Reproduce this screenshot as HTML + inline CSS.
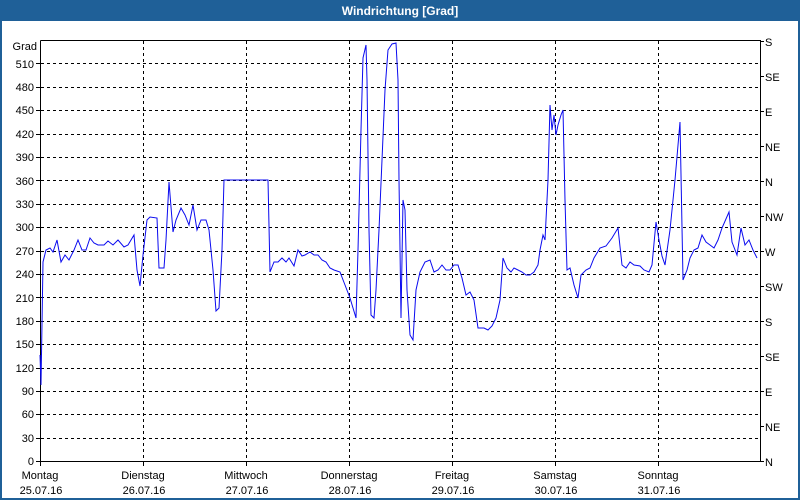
<!DOCTYPE html>
<html><head><meta charset="utf-8"><style>
html,body{margin:0;padding:0;width:800px;height:500px;overflow:hidden;background:#fff;font-family:"Liberation Sans",Tahoma,sans-serif;}
</style></head><body>
<svg width="800" height="500" xmlns="http://www.w3.org/2000/svg" font-family="Liberation Sans, sans-serif" font-size="11">
<rect x="0" y="0" width="800" height="500" fill="#1f6098"/>
<rect x="2" y="21" width="796" height="477" fill="#fff"/>
<text x="400" y="15" text-anchor="middle" fill="#fff" font-weight="bold" font-size="12">Windrichtung [Grad]</text>
<g stroke="#000" stroke-dasharray="3,3" stroke-width="1">
<line x1="41" x2="760" y1="63.5" y2="63.5"/><line x1="41" x2="760" y1="87.5" y2="87.5"/><line x1="41" x2="760" y1="110.5" y2="110.5"/><line x1="41" x2="760" y1="134.5" y2="134.5"/><line x1="41" x2="760" y1="157.5" y2="157.5"/><line x1="41" x2="760" y1="180.5" y2="180.5"/><line x1="41" x2="760" y1="204.5" y2="204.5"/><line x1="41" x2="760" y1="227.5" y2="227.5"/><line x1="41" x2="760" y1="251.5" y2="251.5"/><line x1="41" x2="760" y1="274.5" y2="274.5"/><line x1="41" x2="760" y1="297.5" y2="297.5"/><line x1="41" x2="760" y1="321.5" y2="321.5"/><line x1="41" x2="760" y1="344.5" y2="344.5"/><line x1="41" x2="760" y1="368.5" y2="368.5"/><line x1="41" x2="760" y1="391.5" y2="391.5"/><line x1="41" x2="760" y1="414.5" y2="414.5"/><line x1="41" x2="760" y1="438.5" y2="438.5"/>
<line y1="41" y2="461" x1="143.5" x2="143.5"/><line y1="41" y2="461" x1="246.5" x2="246.5"/><line y1="41" y2="461" x1="349.5" x2="349.5"/><line y1="41" y2="461" x1="452.5" x2="452.5"/><line y1="41" y2="461" x1="555.5" x2="555.5"/><line y1="41" y2="461" x1="658.5" x2="658.5"/>
</g>
<g stroke="#000" stroke-width="1">
<polyline fill="none" points="40.5,40.5 760.5,40.5 760.5,461.5 40.5,461.5 40.5,40.5"/>
<line x1="40.5" y1="461" x2="40.5" y2="466"/><line x1="143.5" y1="461" x2="143.5" y2="466"/><line x1="246.5" y1="461" x2="246.5" y2="466"/><line x1="349.5" y1="461" x2="349.5" y2="466"/><line x1="452.5" y1="461" x2="452.5" y2="466"/><line x1="555.5" y1="461" x2="555.5" y2="466"/><line x1="658.5" y1="461" x2="658.5" y2="466"/>
<g><line x1="36" x2="40" y1="63.5" y2="63.5"/><line x1="36" x2="40" y1="87.5" y2="87.5"/><line x1="36" x2="40" y1="110.5" y2="110.5"/><line x1="36" x2="40" y1="134.5" y2="134.5"/><line x1="36" x2="40" y1="157.5" y2="157.5"/><line x1="36" x2="40" y1="180.5" y2="180.5"/><line x1="36" x2="40" y1="204.5" y2="204.5"/><line x1="36" x2="40" y1="227.5" y2="227.5"/><line x1="36" x2="40" y1="251.5" y2="251.5"/><line x1="36" x2="40" y1="274.5" y2="274.5"/><line x1="36" x2="40" y1="297.5" y2="297.5"/><line x1="36" x2="40" y1="321.5" y2="321.5"/><line x1="36" x2="40" y1="344.5" y2="344.5"/><line x1="36" x2="40" y1="368.5" y2="368.5"/><line x1="36" x2="40" y1="391.5" y2="391.5"/><line x1="36" x2="40" y1="414.5" y2="414.5"/><line x1="36" x2="40" y1="438.5" y2="438.5"/><line x1="36" x2="40" y1="461.5" y2="461.5"/></g>
<g><line x1="760" x2="764" y1="41.5" y2="41.5"/><line x1="760" x2="764" y1="76.5" y2="76.5"/><line x1="760" x2="764" y1="111.5" y2="111.5"/><line x1="760" x2="764" y1="146.5" y2="146.5"/><line x1="760" x2="764" y1="181.5" y2="181.5"/><line x1="760" x2="764" y1="216.5" y2="216.5"/><line x1="760" x2="764" y1="251.5" y2="251.5"/><line x1="760" x2="764" y1="286.5" y2="286.5"/><line x1="760" x2="764" y1="321.5" y2="321.5"/><line x1="760" x2="764" y1="356.5" y2="356.5"/><line x1="760" x2="764" y1="391.5" y2="391.5"/><line x1="760" x2="764" y1="426.5" y2="426.5"/><line x1="760" x2="764" y1="461.5" y2="461.5"/></g>
</g>
<g text-anchor="end" fill="#000">
<text x="37" y="50">Grad</text>
<text x="34" y="68">510</text><text x="34" y="91">480</text><text x="34" y="114">450</text><text x="34" y="138">420</text><text x="34" y="161">390</text><text x="34" y="185">360</text><text x="34" y="208">330</text><text x="34" y="231">300</text><text x="34" y="255">270</text><text x="34" y="278">240</text><text x="34" y="302">210</text><text x="34" y="325">180</text><text x="34" y="348">150</text><text x="34" y="372">120</text><text x="34" y="395">90</text><text x="34" y="418">60</text><text x="34" y="442">30</text><text x="34" y="465">0</text>
</g>
<g fill="#000">
<text x="765" y="46">S</text><text x="765" y="81">SE</text><text x="765" y="116">E</text><text x="765" y="151">NE</text><text x="765" y="186">N</text><text x="765" y="221">NW</text><text x="765" y="256">W</text><text x="765" y="291">SW</text><text x="765" y="326">S</text><text x="765" y="361">SE</text><text x="765" y="396">E</text><text x="765" y="431">NE</text><text x="765" y="466">N</text>
</g>
<g fill="#000" text-anchor="middle">
<text x="40" y="479">Montag</text><text x="41" y="494">25.07.16</text>
<text x="143" y="479">Dienstag</text><text x="144" y="494">26.07.16</text>
<text x="246" y="479">Mittwoch</text><text x="247" y="494">27.07.16</text>
<text x="349" y="479">Donnerstag</text><text x="350" y="494">28.07.16</text>
<text x="452" y="479">Freitag</text><text x="453" y="494">29.07.16</text>
<text x="555" y="479">Samstag</text><text x="556" y="494">30.07.16</text>
<text x="658" y="479">Sonntag</text><text x="659" y="494">31.07.16</text>
</g>
<polyline fill="none" stroke="#0a0af0" stroke-width="1" points="40,355 41,385 43,262 46,250 50,248 53,252 57,240 61,262 65,255 69,260 74,250 78,240 82,250 86,250 90,238 94,243 98,245 104,245 108,241 113,245 118,240 124,247 128,245 134,235 137,270 140,286 143,255 147,220 150,217 157,218 159,268 164,268 166,240 169,182 173,232 176,220 181,208 185,215 189,225 193,205 197,230 201,220 206,220 209,230 213,270 216,311 219,308 222,250 224,180 268,180 270,272 274,262 278,262 282,258 286,262 289,258 294,266 298,250 302,256 305,255 310,252 314,255 318,255 322,260 326,262 330,268 334,270 340,272 345,285 350,298 356,318 358,250 361,130 363,58 366,45 367,80 369,230 371,315 374,318 376,290 379,230 382,160 385,90 388,50 392,44 396,43 398,80 399,180 401,318 403,200 405,210 407,290 410,335 413,340 416,290 420,272 425,262 430,260 434,272 438,270 442,265 446,270 450,270 454,265 458,265 462,278 466,295 470,292 474,300 478,328 484,328 488,330 492,326 496,318 500,300 503,258 507,268 511,272 514,268 518,270 522,272 526,275 530,275 534,272 538,265 540,250 543,235 545,240 548,180 550,105 552,130 554,115 556,135 558,125 561,115 563,110 565,200 567,270 570,268 574,285 578,298 581,275 586,270 590,268 594,258 600,248 606,246 612,238 618,228 622,265 626,268 630,262 634,265 640,266 644,270 649,272 652,265 656,222 659,240 662,256 665,265 670,230 675,180 680,122 683,280 687,270 690,258 694,250 698,248 702,235 706,242 710,245 714,248 718,240 722,228 729,212 732,242 737,255 741,228 745,245 749,240 753,250 757,258"/>
</svg>
</body></html>
